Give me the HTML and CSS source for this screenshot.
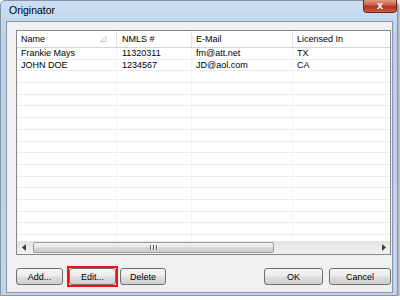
FILE: index.html
```html
<!DOCTYPE html>
<html lang="en">
<head>
    <link rel="stylesheet" href="styles.css">
    <title>Originator</title>
</head>
<body>
<div class="window">
    <div class="title-bar">
        <span class="title">Originator</span>
        <span class="close-button">x</span>
    </div>
    <div class="client">
        <div class="list">
            <div class="list-header">
                <div class="head-cell name-col">Name
                    <svg class="sort-mark" width="7" height="6" viewBox="0 0 7 6"><path d="M0.5 5.5 L6 0.5 L6 5.5 Z" fill="none" stroke="#c8c8c8" stroke-width="1"/></svg>
                </div>
                <div class="head-cell nmls-col">NMLS #</div>
                <div class="head-cell mail-col">E-Mail</div>
                <div class="head-cell lic-col">Licensed In</div>
            </div>
            <div class="list-body">
                <div class="row">
                    <div class="cell name-col">Frankie Mays</div>
                    <div class="cell nmls-col">11320311</div>
                    <div class="cell mail-col">fm@att.net</div>
                    <div class="cell lic-col">TX</div>
                </div>
                <div class="row">
                    <div class="cell name-col">JOHN DOE</div>
                    <div class="cell nmls-col">1234567</div>
                    <div class="cell mail-col">JD@aol.com</div>
                    <div class="cell lic-col">CA</div>
                </div>
                <!-- empty rows -->
                <div class="row"><div class="cell"></div><div class="cell"></div><div class="cell"></div><div class="cell"></div></div>
                <div class="row"><div class="cell"></div><div class="cell"></div><div class="cell"></div><div class="cell"></div></div>
                <div class="row"><div class="cell"></div><div class="cell"></div><div class="cell"></div><div class="cell"></div></div>
                <div class="row"><div class="cell"></div><div class="cell"></div><div class="cell"></div><div class="cell"></div></div>
                <div class="row"><div class="cell"></div><div class="cell"></div><div class="cell"></div><div class="cell"></div></div>
                <div class="row"><div class="cell"></div><div class="cell"></div><div class="cell"></div><div class="cell"></div></div>
                <div class="row"><div class="cell"></div><div class="cell"></div><div class="cell"></div><div class="cell"></div></div>
                <div class="row"><div class="cell"></div><div class="cell"></div><div class="cell"></div><div class="cell"></div></div>
                <div class="row"><div class="cell"></div><div class="cell"></div><div class="cell"></div><div class="cell"></div></div>
                <div class="row"><div class="cell"></div><div class="cell"></div><div class="cell"></div><div class="cell"></div></div>
                <div class="row"><div class="cell"></div><div class="cell"></div><div class="cell"></div><div class="cell"></div></div>
                <div class="row"><div class="cell"></div><div class="cell"></div><div class="cell"></div><div class="cell"></div></div>
                <div class="row"><div class="cell"></div><div class="cell"></div><div class="cell"></div><div class="cell"></div></div>
                <div class="row"><div class="cell"></div><div class="cell"></div><div class="cell"></div><div class="cell"></div></div>
                <div class="row"><div class="cell"></div><div class="cell"></div><div class="cell"></div><div class="cell"></div></div>
            </div>
            <div class="h-scroll">
                <div class="scroll-arrow">
                    <svg width="4" height="7" viewBox="0 0 4 7"><path d="M4 0 L0 3.5 L4 7 Z" fill="#3c3c3c"/></svg>
                </div>
                <div class="scroll-track">
                    <div class="scroll-thumb">
                        <span class="grip"></span><span class="grip"></span><span class="grip"></span>
                    </div>
                </div>
                <div class="scroll-arrow">
                    <svg width="4" height="7" viewBox="0 0 4 7"><path d="M0 0 L4 3.5 L0 7 Z" fill="#3c3c3c"/></svg>
                </div>
            </div>
        </div>
        <div class="button-row">
            <button class="btn add-btn">Add...</button>
            <span class="highlight"><button class="btn edit-btn">Edit...</button></span>
            <button class="btn delete-btn">Delete</button>
            <span class="spacer"></span>
            <button class="btn ok-btn">OK</button>
            <button class="btn cancel-btn">Cancel</button>
        </div>
    </div>
</div>
</body>
</html>
```

FILE: styles.css
```css
body {
  margin: 0;
  background-color: #ffffff;
  font-family: "Liberation Sans", Arial, sans-serif;
  font-size: 9px;
  color: #000000;
}

/* window frame */
.window {
  width: 398px;
  height: 296px;
  box-sizing: border-box;
  border: 1px solid #8794a3;
  border-radius: 5px 5px 0 0;
  background: linear-gradient(#cbdef3, #b9d1ec 40px, #bfd5ee);
  box-shadow: 2px 2px 3px rgba(0, 0, 0, 0.35);
  display: flex;
  flex-direction: column;
  padding: 0 4px 2px 5px;
}

.title-bar {
  height: 20px;
  display: flex;
  justify-content: space-between;
  align-items: flex-start;
}

.title {
  padding-left: 3px;
  line-height: 19px;
  font-size: 10.5px;
}

.close-button {
  width: 34px;
  height: 13px;
  box-sizing: border-box;
  margin: -1px -4px 0 0;
  border: 1px solid #6e2a20;
  border-top: none;
  border-radius: 0 0 4px 4px;
  background: linear-gradient(#e39a88, #c9563f 45%, #b2321f 55%, #c85c45);
  color: #ffffff;
  font-weight: bold;
  font-size: 11px;
  line-height: 10px;
  text-align: center;
}

.client {
  flex: 1;
  box-sizing: border-box;
  border: 1px solid #8a96a4;
  background-color: #f0f0f0;
  padding: 8px 1px 0 9px;
  display: flex;
  flex-direction: column;
}

/* list view */
.list {
  height: 225px;
  box-sizing: border-box;
  border: 1px solid #828790;
  background-color: #ffffff;
  display: flex;
  flex-direction: column;
  overflow: hidden;
}

.list-header,
.row {
  display: grid;
  grid-template-columns: 100px 75px 101px 98px;
}

.list-header {
  height: 17px;
  box-sizing: border-box;
  border-bottom: 1px solid #d5d5d5;
}

.head-cell {
  border-right: 1px solid #e3e3e3;
  line-height: 16px;
  padding-left: 4px;
  position: relative;
}

.nmls-col {
  padding-left: 5px;
}

.sort-mark {
  position: absolute;
  right: 9px;
  top: 5px;
}

.list-body {
  flex: 1;
  overflow: hidden;
}

.row {
  height: 11.7px;
  box-sizing: border-box;
  border-bottom: 1px solid #ececec;
}

.cell {
  border-right: 1px solid #f3f3f3;
  line-height: 11px;
  padding-left: 4px;
  white-space: nowrap;
}

.cell.nmls-col {
  padding-left: 5px;
}

/* horizontal scroll bar */
.h-scroll {
  height: 13px;
  display: flex;
  background: linear-gradient(#e3e3e3, #f1f1f1);
}

.scroll-arrow {
  width: 13px;
  display: flex;
  align-items: center;
  justify-content: center;
}

.scroll-track {
  flex: 1;
  padding: 1px 0 1px 3px;
  display: flex;
}

.scroll-thumb {
  width: 241px;
  box-sizing: border-box;
  border: 1px solid #9c9c9c;
  border-radius: 2px;
  background: linear-gradient(#f3f3f3, #e6e6e6 45%, #d4d4d4 55%, #cfcfcf);
  display: flex;
  justify-content: center;
  align-items: center;
  gap: 1px;
}

.grip {
  width: 1px;
  height: 5px;
  background-color: #5c5c5c;
  border-right: 1px solid #f6f6f6;
}

/* buttons */
.button-row {
  margin-top: 13px;
  display: flex;
  align-items: center;
}

.spacer {
  flex: 1;
}

.btn {
  height: 17px;
  box-sizing: border-box;
  border: 1px solid #707070;
  border-radius: 3px;
  background: linear-gradient(#f4f4f4, #ececec 48%, #dedede 52%, #d0d0d0);
  font-family: "Liberation Sans", Arial, sans-serif;
  font-size: 9px;
  color: #000000;
  padding: 0;
  display: block;
}

.add-btn {
  width: 47px;
}

/* red marker box round the Edit button */
.highlight {
  margin: -2px 0 -2px 4px;
  border: 2px solid #e8141b;
}

.edit-btn {
  width: 47px;
}

.delete-btn {
  width: 46px;
  margin-left: 2px;
}

.ok-btn {
  width: 59px;
}

.cancel-btn {
  width: 62px;
  margin-left: 6px;
}
```
